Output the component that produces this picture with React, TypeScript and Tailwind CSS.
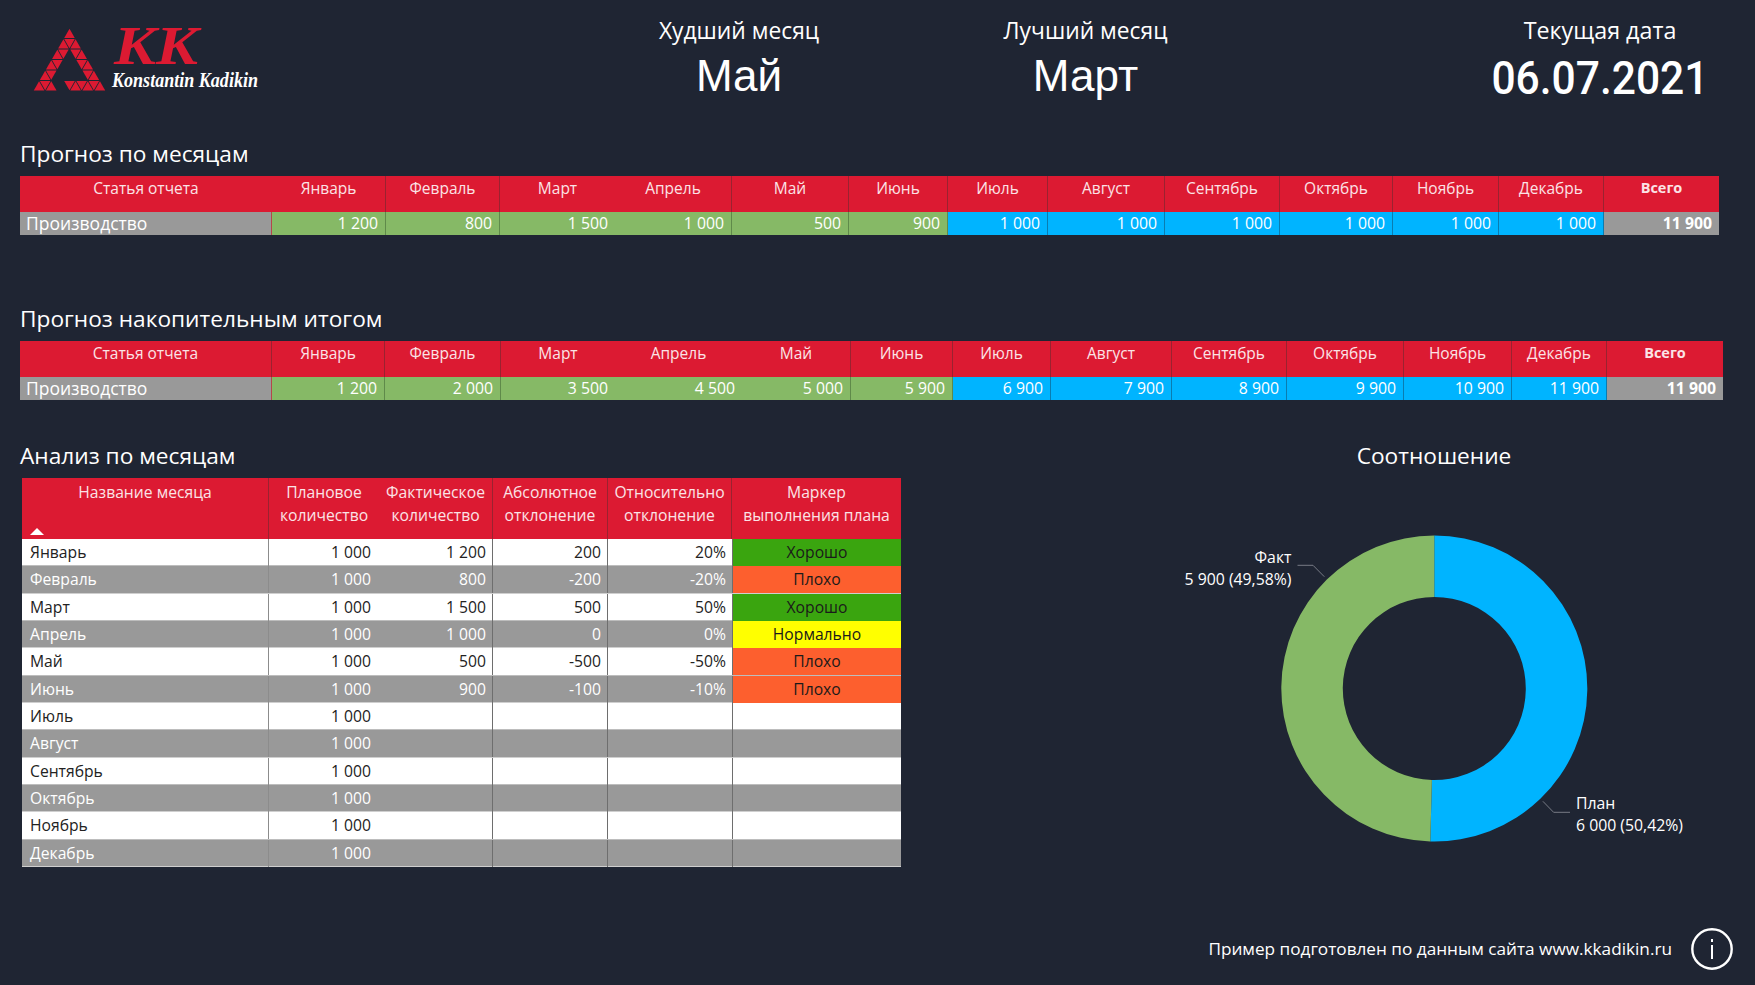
const months = ["Январь", "Февраль", "Март", "Апрель", "Май", "Июнь", "Июль", "Август", "Сентябрь", "Октябрь", "Ноябрь", "Декабрь"];

const monthly = ["1 200", "800", "1 500", "1 000", "500", "900", "1 000", "1 000", "1 000", "1 000", "1 000", "1 000"];
const cumulative = ["1 200", "2 000", "3 500", "4 500", "5 000", "5 900", "6 900", "7 900", "8 900", "9 900", "10 900", "11 900"];

const analysis = [
  { month: "Январь", plan: "1 000", fact: "1 200", abs: "200", rel: "20%", marker: "Хорошо" },
  { month: "Февраль", plan: "1 000", fact: "800", abs: "-200", rel: "-20%", marker: "Плохо" },
  { month: "Март", plan: "1 000", fact: "1 500", abs: "500", rel: "50%", marker: "Хорошо" },
  { month: "Апрель", plan: "1 000", fact: "1 000", abs: "0", rel: "0%", marker: "Нормально" },
  { month: "Май", plan: "1 000", fact: "500", abs: "-500", rel: "-50%", marker: "Плохо" },
  { month: "Июнь", plan: "1 000", fact: "900", abs: "-100", rel: "-10%", marker: "Плохо" },
  { month: "Июль", plan: "1 000", fact: "", abs: "", rel: "", marker: "" },
  { month: "Август", plan: "1 000", fact: "", abs: "", rel: "", marker: "" },
  { month: "Сентябрь", plan: "1 000", fact: "", abs: "", rel: "", marker: "" },
  { month: "Октябрь", plan: "1 000", fact: "", abs: "", rel: "", marker: "" },
  { month: "Ноябрь", plan: "1 000", fact: "", abs: "", rel: "", marker: "" },
  { month: "Декабрь", plan: "1 000", fact: "", abs: "", rel: "", marker: "" },
];

const markerBg: Record<string, string> = {
  Хорошо: "bg-[#3aa50f]",
  Плохо: "bg-[#fd5f2e]",
  Нормально: "bg-[#ffff00]",
  "": "",
};

function Logo() {
  const s = 12.17;
  const h = 10.5;
  const ax = 69.5;
  const ay = 28;
  const keep: [number, "u" | "d", number][] = [
    [0, "u", 0],
    [1, "u", 0], [1, "d", 0], [1, "u", 1],
    [2, "u", 0], [2, "d", 0], [2, "d", 1], [2, "u", 2],
    [3, "u", 0], [3, "d", 0], [3, "d", 2], [3, "u", 3],
    [4, "u", 0], [4, "d", 0], [4, "d", 3], [4, "u", 4],
    [5, "u", 0], [5, "d", 0], [5, "u", 1], [5, "d", 2], [5, "u", 3], [5, "d", 3], [5, "u", 4], [5, "d", 4], [5, "u", 5],
  ];
  return (
    <svg width="270" height="110" viewBox="0 0 270 110">
      {keep.map(([r, t, i]) => {
        const x0 = ax - (r * s) / 2 + i * s;
        const y0 = ay + r * h;
        const pts =
          t === "u"
            ? `${x0},${y0 + 0.7} ${x0 - s / 2 + 0.8},${y0 + h - 0.4} ${x0 + s / 2 - 0.8},${y0 + h - 0.4}`
            : `${x0 + 0.8},${y0 + 0.4} ${x0 + s - 0.8},${y0 + 0.4} ${x0 + s / 2},${y0 + h - 0.7}`;
        return <polygon key={`${r}${t}${i}`} points={pts} fill="#dc1a32" />;
      })}
      <text x="114" y="64" textLength="84" lengthAdjust="spacingAndGlyphs" fill="#dc1a32" fontFamily="'Liberation Serif', serif" fontStyle="italic" fontWeight="700" fontSize="54">
        KK
      </text>
      <text x="112" y="87" textLength="146" lengthAdjust="spacingAndGlyphs" fill="#ffffff" fontFamily="'Liberation Serif', serif" fontStyle="italic" fontWeight="700" fontSize="20">
        Konstantin Kadikin
      </text>
    </svg>
  );
}

function ForecastTable({ grid, values, noLine, plainFirst }: { grid: string; values: string[]; noLine: number[]; plainFirst?: boolean }) {
  return (
    <div className={grid}>
      <div className={plainFirst ? "h-[36px] bg-[#dc1a32] text-center text-[15.5px] leading-[24px] text-[#fbe3e6]" : "h-[36px] border-r border-[#9a2230] bg-[#dc1a32] text-center text-[15.5px] leading-[24px] text-[#fbe3e6]"}>
        Статья отчета
      </div>
      {months.map((m, i) => (
        <div
          key={m}
          className={
            noLine.includes(i)
              ? "h-[36px] bg-[#dc1a32] text-center text-[15.5px] leading-[24px] text-[#fbe3e6]"
              : "h-[36px] border-r border-[#9a2230] bg-[#dc1a32] text-center text-[15.5px] leading-[24px] text-[#fbe3e6]"
          }
        >
          {m}
        </div>
      ))}
      <div className="h-[36px] bg-[#dc1a32] text-center text-[14.5px] font-bold leading-[24px] text-[#fbe3e6]">Всего</div>
      <div className="h-[23px] border-r border-[#b5464a] bg-[#999999] pl-[6px] text-[17.5px] leading-[23px] text-white">Производство</div>
      {values.map((v, i) => (
        <div
          key={months[i]}
          className={
            i < 6
              ? noLine.includes(i)
                ? "h-[23px] bg-[#86b966] pr-[7px] text-right text-[15.8px] leading-[22px] whitespace-nowrap text-white"
                : "h-[23px] border-r border-[#5f8a4a] bg-[#86b966] pr-[7px] text-right text-[15.8px] leading-[22px] whitespace-nowrap text-white"
              : "h-[23px] border-r border-[#0a7cb0] bg-[#00b4ff] pr-[7px] text-right text-[15.8px] leading-[22px] whitespace-nowrap text-white"
          }
        >
          {v}
        </div>
      ))}
      <div className="h-[23px] bg-[#999999] pr-[7px] text-right text-[15.8px] font-bold leading-[22px] whitespace-nowrap text-white">11 900</div>
    </div>
  );
}

function Analysis() {
  const head = "border-r border-[#9a2230] px-1 pt-[3px] text-center text-[15.7px] leading-[23px] text-[#fbe3e6]";
  return (
    <div className="w-[879px]">
      <div className="relative grid h-[61px] grid-cols-[247px_110px_114px_115px_124px_169px] bg-[#dc1a32]">
        <div className={head}>Название месяца</div>
        <div className="px-0 pt-[3px] text-center text-[15.7px] leading-[23px] text-[#fbe3e6]">Плановое<br />количество</div>
        <div className={head}>Фактическое<br />количество</div>
        <div className={head}>Абсолютное<br />отклонение</div>
        <div className="border-r border-[#9a2230] pt-[3px] text-center text-[15.7px] leading-[23px] text-[#fbe3e6]">Относительно<br />отклонение</div>
        <div className="px-0 pt-[3px] text-center text-[15.7px] leading-[23px] text-[#fbe3e6]">Маркер<br />выполнения плана</div>
        <svg className="absolute bottom-[4px] left-[8px]" width="14" height="7" viewBox="0 0 14 7">
          <polygon points="7,0 14,7 0,7" fill="#ffffff" />
        </svg>
      </div>
      {analysis.map((r, i) => (
        <div
          key={r.month}
          className={
            i % 2 === 0
              ? "grid h-[27.35px] grid-cols-[247px_110px_114px_115px_124px_169px] border-b border-[#bdbdbd] bg-white text-[15.7px] leading-[27px] text-[#222222]"
              : "grid h-[27.35px] grid-cols-[247px_110px_114px_115px_124px_169px] border-b border-[#cfcfcf] bg-[#999999] text-[15.7px] leading-[27px] text-white"
          }
        >
          <div className="border-r border-[#8c8c8c] pl-[8px]">{r.month}</div>
          <div className="pr-[8px] text-right whitespace-nowrap">{r.plan}</div>
          <div className="border-r border-[#6e6e6e] pr-[6px] text-right whitespace-nowrap">{r.fact}</div>
          <div className="border-r border-[#6e6e6e] pr-[6px] text-right">{r.abs}</div>
          <div className="pr-[6px] text-right">{r.rel}</div>
          <div className={`${markerBg[r.marker]} border-l border-[#6e6e6e] text-center text-[#1a1a1a]`}>{r.marker}</div>
        </div>
      ))}
    </div>
  );
}

function Donut() {
  const cx = 1434.3;
  const cy = 689.5;
  const R = 153;
  const r = 91.5;
  const a = (181.5 * Math.PI) / 180;
  const p = (rad: number, ang: number) => `${cx + rad * Math.sin(ang)} ${cy - rad * Math.cos(ang)}`;
  const blue = `M ${p(R, 0)} A ${R} ${R} 0 1 1 ${p(R, a)} L ${p(r, a)} A ${r} ${r} 0 1 0 ${p(r, 0)} Z`;
  const green = `M ${p(R, a)} A ${R} ${R} 0 0 1 ${p(R, 2 * Math.PI - 0.0001)} L ${p(r, 2 * Math.PI - 0.0001)} A ${r} ${r} 0 0 0 ${p(r, a)} Z`;
  return (
    <svg className="mt-[21px]" width="560" height="360" viewBox="1154 500 560 360" fontFamily="'Open Sans', sans-serif" fontSize="15.8" fill="#ffffff">
      <path d={blue} fill="#00b4ff" />
      <path d={green} fill="#86b966" />
      <polyline points="1297.5,566.3 1313,566.3 1324.3,577.7" fill="none" stroke="#777b85" strokeWidth="1" />
      <polyline points="1542.9,802.3 1553.6,813.3 1570,813.3" fill="none" stroke="#777b85" strokeWidth="1" />
      <text x="1291.5" y="564" textAnchor="end">Факт</text>
      <text x="1291.5" y="586" textAnchor="end">5 900 (49,58%)</text>
      <text x="1576" y="809.5">План</text>
      <text x="1576" y="831.5">6 000 (50,42%)</text>
    </svg>
  );
}

function SectionTitle({ children }: { children: string }) {
  return <div className="h-[39px] text-[22.7px] leading-[34px] text-white">{children}</div>;
}

export default function App() {
  return (
    <div className="h-[985px] w-[1755px] overflow-hidden bg-[#1f2533] font-['Open_Sans',sans-serif] text-white">
      <div className="grid h-[137px] grid-cols-[570px_338px_355px_492px]">
        <Logo />
        <div className="flex flex-col items-center pt-[15px]">
          <div className="text-[22.8px] leading-[32px]">Худший месяц</div>
          <div className="mt-[1px] font-['Liberation_Sans',sans-serif] text-[44px] leading-[56px]">Май</div>
        </div>
        <div className="flex flex-col items-center pt-[15px]">
          <div className="text-[22.8px] leading-[32px]">Лучший месяц</div>
          <div className="mt-[1px] font-['Liberation_Sans',sans-serif] text-[44px] leading-[56px]">Март</div>
        </div>
        <div className="flex flex-col items-center pt-[14px] pl-[182px]">
          <div className="text-[23.3px] leading-[32px]">Текущая дата</div>
          <div className="mt-[4px] scale-x-[0.905] font-['Roboto',sans-serif] text-[47px] leading-[56px] font-medium whitespace-nowrap">06.07.2021</div>
        </div>
      </div>

      <div className="pl-[20px]">
        <SectionTitle>Прогноз по месяцам</SectionTitle>
        <ForecastTable
          grid="grid w-[1699px] grid-cols-[252px_114px_114px_115px_117px_117px_99px_100px_117px_115px_113px_106px_105px_115px]"
          values={monthly}
          noLine={[2]}
          plainFirst
        />

        <div className="mt-[67px]">
          <SectionTitle>Прогноз накопительным итогом</SectionTitle>
        </div>
        <ForecastTable
          grid="grid w-[1703px] grid-cols-[252px_113px_116px_114px_127px_109px_102px_98px_121px_115px_117px_108px_95px_116px]"
          values={cumulative}
          noLine={[2, 3]}
        />

        <div className="mt-[39px] flex items-start">
          <div className="w-[881px]">
            <SectionTitle>Анализ по месяцам</SectionTitle>
            <div className="ml-[2px]">
              <Analysis />
            </div>
          </div>
          <div className="ml-[212px] flex w-[642px] flex-col items-center">
            <div className="h-[39px] text-[22.7px] leading-[34px]">Соотношение</div>
            <Donut />
          </div>
        </div>
      </div>

      <div className="mt-[61px] flex items-center justify-end pr-[22px]">
        <div className="text-[17.2px] leading-[26px]">Пример подготовлен по данным сайта www.kkadikin.ru</div>
        <svg className="ml-[19px]" width="42" height="42" viewBox="0 0 42 42" fill="none" stroke="#ffffff">
          <circle cx="21" cy="21" r="19.7" strokeWidth="2.4" />
          <line x1="21" y1="17" x2="21" y2="31" strokeWidth="2" />
          <line x1="21" y1="11" x2="21" y2="14" strokeWidth="2" />
        </svg>
      </div>
    </div>
  );
}
